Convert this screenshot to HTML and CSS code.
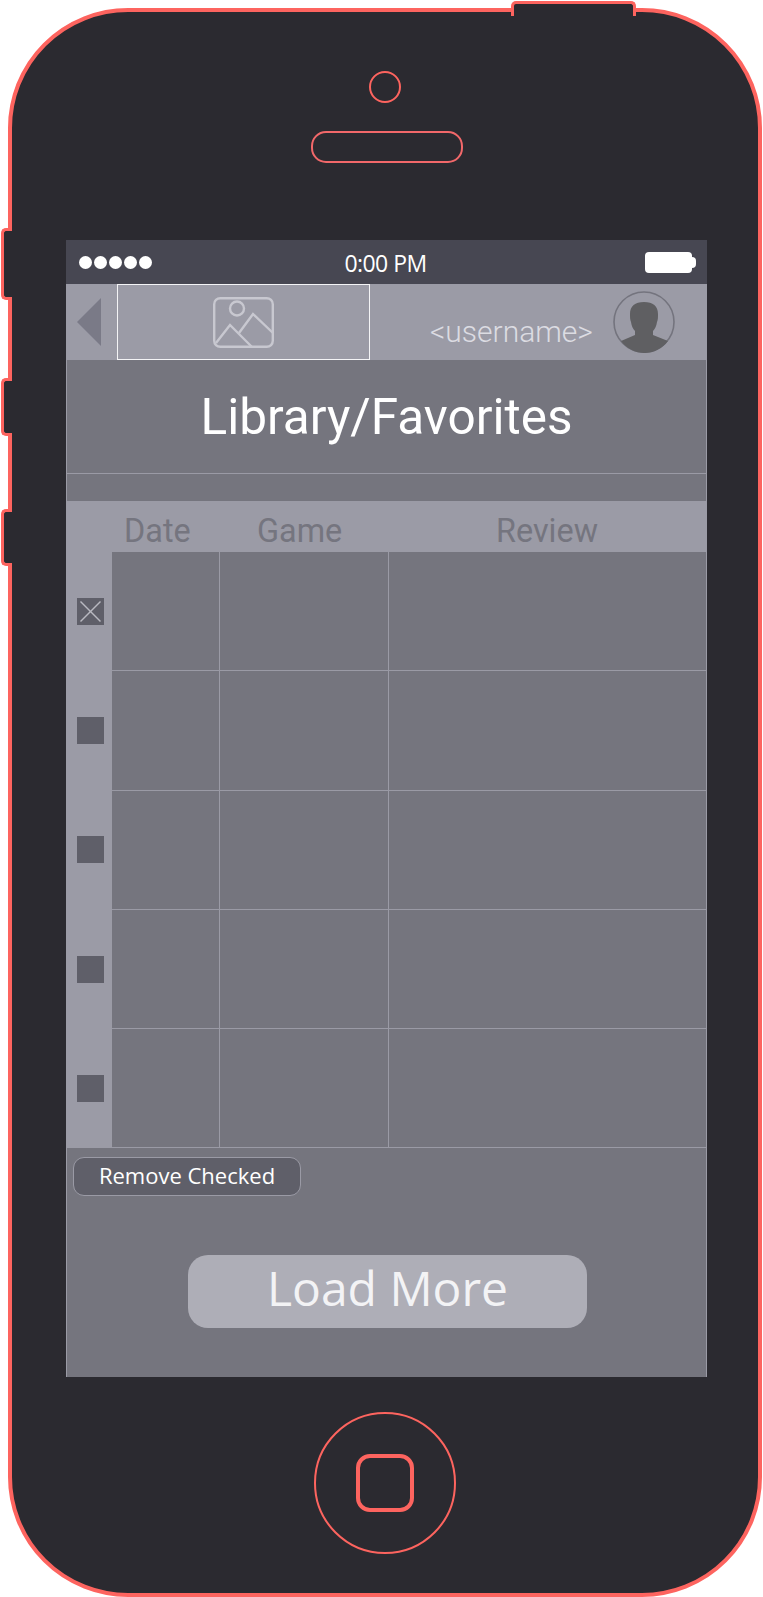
FILE: index.html
```html
<!DOCTYPE html>
<html lang="en">
<head>
    <meta charset="UTF-8">
    <meta name="viewport" content="width=device-width, initial-scale=1.0">
    <title>Library/Favorites</title>
    <link rel="stylesheet" href="styles.css">
</head>
<body>
    <div class="phone">
        <span class="hw-top"></span>
        <span class="hw-side hw-mute"></span>
        <span class="hw-side hw-up"></span>
        <span class="hw-side hw-down"></span>

        <div class="camera"></div>
        <div class="earpiece"></div>

        <div class="screen">
            <div class="status-bar">
                <div class="signal">
                    <span></span><span></span><span></span><span></span><span></span>
                </div>
                <div class="clock">0:00 PM</div>
                <div class="battery"></div>
            </div>

            <div class="top-bar">
                <div class="back"></div>
                <div class="logo-box">
                    <svg class="logo-icon" viewBox="0 0 61 51" fill="none" stroke="#c8c8d0" stroke-width="2.4">
                        <rect x="1.2" y="1.2" width="58.6" height="48.6" rx="6"/>
                        <circle cx="24" cy="11.5" r="7"/>
                        <path d="M3 46 L17 28 L39 50"/>
                        <path d="M26 36 L40 17 L60 36"/>
                    </svg>
                </div>
                <div class="username">&lt;username&gt;</div>
                <svg class="avatar" viewBox="0 0 62 62">
                    <circle cx="31" cy="31" r="30" fill="none" stroke="#74747e" stroke-width="1.6"/>
                    <path fill="#5f5f62" d="M31 11 C40 11 45 15 45 23 C45 26 45 29 44 31 C43.500 35 42 38 40 40 L40 44 L55 50 A29 29 0 0 1 8 50 L22 44 L22 40 C20 38 18.500 35 18 31 C17 29 17 26 17 23 C17 15 22 11 31 11 Z"/>
                </svg>
            </div>

            <div class="panel">
                <div class="title-band">
                    <h1>Library/Favorites</h1>
                </div>
                <div class="spacer-band"></div>

                <div class="table-head">
                    <div class="head-date">Date</div>
                    <div class="head-game">Game</div>
                    <div class="head-review">Review</div>
                </div>

                <div class="row">
                    <div class="check-cell">
                        <div class="check">
                            <svg viewBox="0 0 27 27" stroke="#b9b9c1" stroke-width="1.5">
                                <line x1="3.500" y1="3.500" x2="23.500" y2="23.500"/>
                                <line x1="23.500" y1="3.500" x2="3.500" y2="23.500"/>
                            </svg>
                        </div>
                    </div>
                    <div class="cell"></div><div class="cell"></div><div class="cell"></div>
                </div>
                <div class="row">
                    <div class="check-cell"><div class="check"></div></div>
                    <div class="cell"></div><div class="cell"></div><div class="cell"></div>
                </div>
                <div class="row">
                    <div class="check-cell"><div class="check"></div></div>
                    <div class="cell"></div><div class="cell"></div><div class="cell"></div>
                </div>
                <div class="row">
                    <div class="check-cell"><div class="check"></div></div>
                    <div class="cell"></div><div class="cell"></div><div class="cell"></div>
                </div>
                <div class="row">
                    <div class="check-cell"><div class="check"></div></div>
                    <div class="cell"></div><div class="cell"></div><div class="cell"></div>
                </div>

                <button class="remove-btn">Remove Checked</button>
                <button class="load-btn">Load More</button>
            </div>
        </div>

        <div class="home">
            <div class="home-square"></div>
        </div>
    </div>
</body>
</html>
```

FILE: styles.css
```css
body {
    margin: 0;
    padding: 0;
    background-color: #fff;
}

.phone {
    position: relative;
    box-sizing: border-box;
    width: 754px;
    height: 1589px;
    margin: 8px 0 0 8px;
    padding-top: 59px;
    display: flex;
    flex-direction: column;
    align-items: center;
    background-color: #2b2a30;
    border: 4px solid #fd645f;
    border-radius: 120px;
}

/* hardware buttons sit over the outline */
.hw-top {
    position: absolute;
    top: -11px;
    left: 499px;
    box-sizing: border-box;
    width: 125px;
    height: 11px;
    background-color: #2b2a30;
    border: 3px solid #fd645f;
    border-bottom: none;
    border-radius: 5px 5px 0 0;
}

.hw-top::after {
    content: "";
    position: absolute;
    left: -3px;
    right: -3px;
    top: 8px;
    height: 4px;
    background-color: #2b2a30;
    border-left: 3px solid #fd645f;
    border-right: 3px solid #fd645f;
    box-sizing: border-box;
}

.hw-side {
    position: absolute;
    left: -11px;
    box-sizing: border-box;
    width: 11px;
    background-color: #2b2a30;
    border: 3px solid #fd645f;
    border-right: none;
    border-radius: 5px 0 0 5px;
}

.hw-side::after {
    content: "";
    position: absolute;
    left: 8px;
    top: 0;
    bottom: 0;
    width: 4px;
    background-color: #2b2a30;
}

.hw-mute {
    top: 216px;
    height: 72px;
}

.hw-up {
    top: 366px;
    height: 58px;
}

.hw-down {
    top: 497px;
    height: 57px;
}

.camera {
    box-sizing: border-box;
    width: 32px;
    height: 32px;
    border: 2px solid #fd645f;
    border-radius: 50%;
}

.earpiece {
    box-sizing: border-box;
    width: 152px;
    height: 32px;
    margin: 28px 0 0 3px;
    border: 2px solid #f2686a;
    border-radius: 15px;
}

.screen {
    width: 641px;
    margin: 77px 0 0 3px;
    font-family: 'Roboto', sans-serif;
}

.status-bar {
    display: grid;
    grid-template-columns: 1fr auto 1fr;
    align-items: center;
    height: 44px;
    padding: 0 11px 0 13px;
    background-color: #474752;
}

.signal {
    display: flex;
    gap: 2px;
}

.signal span {
    width: 13px;
    height: 13px;
    border-radius: 50%;
    background-color: #fff;
}

.clock {
    margin: 2px 4px 0 0;
    font-family: 'Open Sans', sans-serif;
    font-size: 23px;
    letter-spacing: -0.55px;
    color: #fff;
}

.battery {
    position: relative;
    justify-self: end;
    width: 47px;
    height: 21px;
    margin-right: 4px;
    border-radius: 4px;
    background-color: #fff;
}

.battery::after {
    content: "";
    position: absolute;
    right: -4px;
    top: 5px;
    width: 4px;
    height: 11px;
    border-radius: 0 4px 4px 0;
    background-color: #fff;
}

.top-bar {
    display: flex;
    align-items: center;
    height: 76px;
    background-color: #9b9ba6;
}

.back {
    width: 0;
    height: 0;
    margin-left: 11px;
    border-top: 24px solid transparent;
    border-bottom: 24px solid transparent;
    border-right: 24px solid #7a7a87;
}

.logo-box {
    display: flex;
    align-items: center;
    justify-content: center;
    box-sizing: border-box;
    width: 253px;
    height: 76px;
    margin-left: 16px;
    border: 1px solid #f4f4f6;
}

.logo-icon {
    width: 61px;
    height: 51px;
}

.username {
    align-self: flex-end;
    margin: 0 0 11px 60px;
    font-size: 30px;
    font-weight: 300;
    color: #dcdce2;
}

.avatar {
    width: 62px;
    height: 62px;
    margin-left: 20px;
}

.panel {
    box-sizing: border-box;
    height: 1017px;
    background-color: #75757e;
    border-left: 1px solid #9a9aa5;
    border-right: 1px solid #9a9aa5;
}

.title-band {
    box-sizing: border-box;
    height: 114px;
    border-bottom: 1px solid #9a9aa5;
}

h1 {
    margin: 0;
    padding-top: 25px;
    text-align: center;
    font-size: 49.500px;
    font-weight: 400;
    line-height: 64px;
    color: #fff;
}

.spacer-band {
    height: 27px;
}

.table-head {
    display: grid;
    grid-template-columns: 45px 107px 169px 318px;
    height: 51px;
    margin: 0 -1px;
    padding: 0 1px;
    background-color: #9b9ba6;
    font-size: 32.400px;
    line-height: 60px;
    color: #75757f;
}

.head-date {
    grid-column: 2;
    padding-left: 12px;
}

.head-game {
    grid-column: 3;
    padding-left: 38px;
}

.head-review {
    grid-column: 4;
    text-align: center;
}

.row {
    display: grid;
    grid-template-columns: 45px 107px 169px 318px;
    height: 119.3px;
}

.check-cell {
    display: flex;
    align-items: center;
    justify-content: center;
    margin-left: -1px;
    padding: 0 0 1px 2px;
    background-color: #9b9ba6;
}

.check {
    width: 27px;
    height: 27px;
    background-color: #5f5f69;
}

.check svg {
    display: block;
}

.cell {
    box-sizing: border-box;
    border-bottom: 1px solid #9a9aa5;
    border-left: 1px solid #9a9aa5;
}

.cell:nth-child(2) {
    border-left: none;
}

.remove-btn {
    display: block;
    box-sizing: border-box;
    width: 228px;
    height: 39px;
    margin: 8.500px 0 0 6px;
    padding: 0 0 2px;
    background-color: #5f5f69;
    border: 1px solid #9a9aa5;
    border-radius: 11px;
    font-family: 'Open Sans', sans-serif;
    font-size: 22px;
    color: #fff;
}

.load-btn {
    display: block;
    width: 399px;
    height: 73px;
    margin: 59px 0 0 121px;
    padding: 0 0 8px;
    background-color: #aeaeb7;
    border: none;
    border-radius: 20px;
    font-family: 'Open Sans', sans-serif;
    font-size: 48px;
    color: #f3f3f5;
}

.home {
    display: flex;
    align-items: center;
    justify-content: center;
    box-sizing: border-box;
    width: 142px;
    height: 142px;
    margin-top: 35px;
    border: 2px solid #fd645f;
    border-radius: 50%;
}

.home-square {
    box-sizing: border-box;
    width: 58px;
    height: 58px;
    border: 4px solid #fd645f;
    border-radius: 14px;
}
```
